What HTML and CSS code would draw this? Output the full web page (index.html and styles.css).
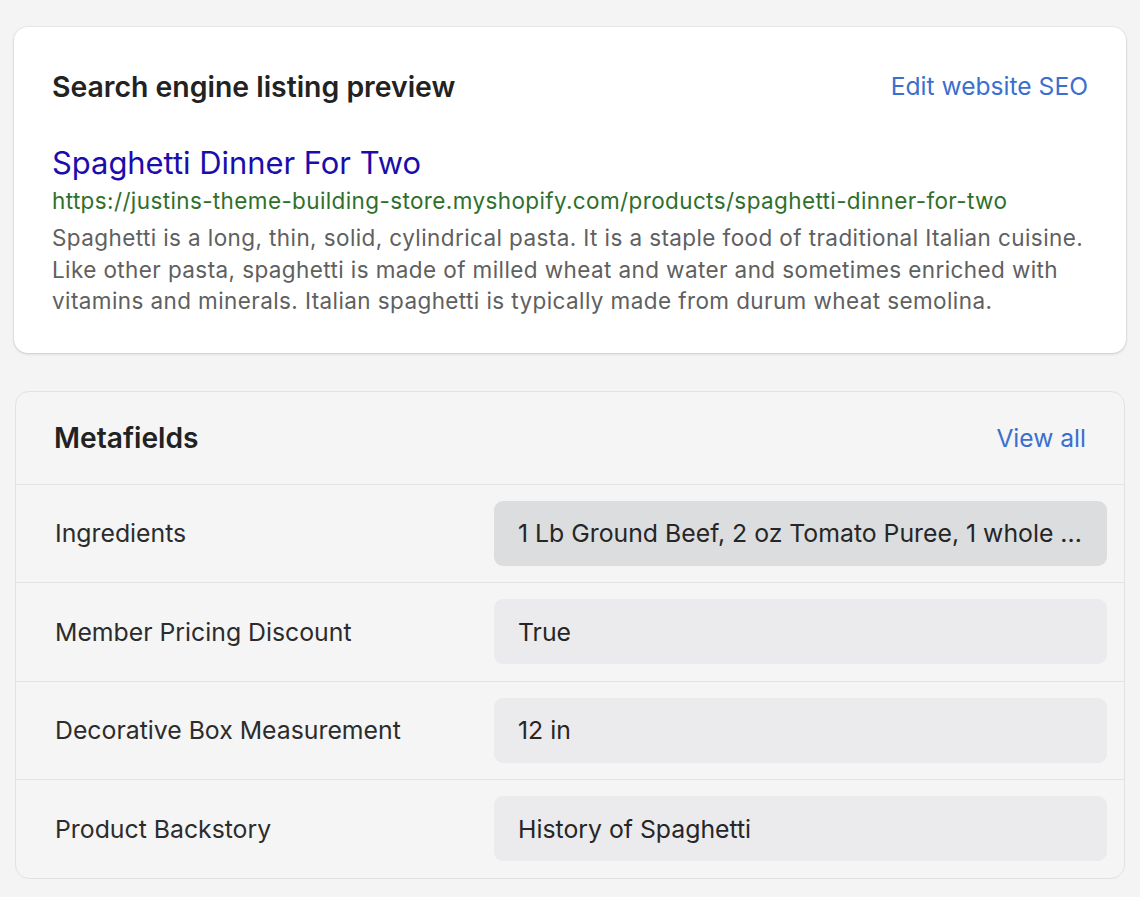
FILE: index.html
```html
<!DOCTYPE html>
<html lang="en">
<head>
<meta charset="utf-8">
<title>Product SEO and metafields</title>
<link rel="stylesheet" href="styles.css">
</head>
<body>
<main class="page">
  <section class="card seo-card">
    <header class="card-header">
      <h2 class="card-title">Search engine listing preview</h2>
      <a class="card-action" href="#">Edit website SEO</a>
    </header>
    <div class="serp">
      <div class="serp-title">Spaghetti Dinner For Two</div>
      <div class="serp-url">https://justins-theme-building-store.myshopify.com/products/spaghetti-dinner-for-two</div>
      <p class="serp-desc">Spaghetti is a long, thin, solid, cylindrical pasta. It is a staple food of traditional Italian cuisine. Like other pasta, spaghetti is made of milled wheat and water and sometimes enriched with vitamins and minerals. Italian spaghetti is typically made from durum wheat semolina.</p>
    </div>
  </section>

  <section class="card meta-card">
    <header class="card-header meta-header">
      <h2 class="card-title meta-title">Metafields</h2>
      <a class="card-action" href="#">View all</a>
    </header>
    <ul class="meta-list">
      <li class="meta-row">
        <span class="meta-label">Ingredients</span>
        <span class="meta-value is-active">1 Lb Ground Beef, 2 oz Tomato Puree, 1 whole ...</span>
      </li>
      <li class="meta-row">
        <span class="meta-label">Member Pricing Discount</span>
        <span class="meta-value">True</span>
      </li>
      <li class="meta-row">
        <span class="meta-label">Decorative Box Measurement</span>
        <span class="meta-value">12 in</span>
      </li>
      <li class="meta-row">
        <span class="meta-label">Product Backstory</span>
        <span class="meta-value">History of Spaghetti</span>
      </li>
    </ul>
  </section>
</main>
</body>
</html>
```

FILE: styles.css
```css
* { box-sizing: border-box; }

html, body {
  margin: 0;
  padding: 0;
  background: #f4f4f4;
}

body {
  font-family: Inter, "Noto Sans", "Liberation Sans", sans-serif;
  color: #303030;
  -webkit-font-smoothing: antialiased;
}

.page {
  padding: 27px 14px 0 14px;
  display: flex;
  flex-direction: column;
  gap: 38px;
}

.card {
  border-radius: 14px;
}

.seo-card {
  background: #ffffff;
  box-shadow: 0 1px 3px rgba(0, 0, 0, 0.16), 0 0 0 1px rgba(0, 0, 0, 0.03);
  padding: 39px 38px 36px 38px;
}

.card-header {
  display: flex;
  align-items: center;
  justify-content: space-between;
  height: 40px;
}

.card-title {
  margin: 0;
  font-size: 28.4px;
  font-weight: 600;
  color: #222222;
}

.meta-title {
  font-size: 28.2px;
}

.card-action {
  font-size: 24.6px;
  color: #3b6fcf;
  text-decoration: none;
}

.serp {
  margin-top: 37px;
}

.serp-title {
  font-size: 30.9px;
  line-height: 40px;
  color: #1a0dab;
}

.serp-url {
  font-size: 22.5px;
  letter-spacing: 0.38px;
  line-height: 34px;
  color: #2f6f2c;
  margin-top: 1px;
}

.serp-desc {
  margin: 4px 0 0 0;
  font-size: 22.5px;
  letter-spacing: 0.4px;
  line-height: 31.5px;
  color: #606060;
}

.meta-card {
  margin: 0 1px;
  border: 1px solid #e2e2e2;
  background: #f5f5f5;
}

.meta-header {
  height: 92px;
  padding: 0 38px;
}

.meta-list {
  list-style: none;
  margin: 0;
  padding: 0;
}

.meta-row {
  display: grid;
  grid-template-columns: 1fr 613px;
  align-items: center;
  height: 98.5px;
  padding: 0 17px 0 39px;
  border-top: 1px solid #e3e3e3;
}

.meta-label {
  font-size: 24.8px;
  color: #2c2c2c;
}

.meta-value {
  display: flex;
  align-items: center;
  height: 65px;
  padding: 0 24px;
  border-radius: 9px;
  background: #ebebed;
  font-size: 24.8px;
  color: #262626;
  white-space: nowrap;
  overflow: hidden;
}

.meta-value.is-active {
  background: #dcdddf;
}
```
